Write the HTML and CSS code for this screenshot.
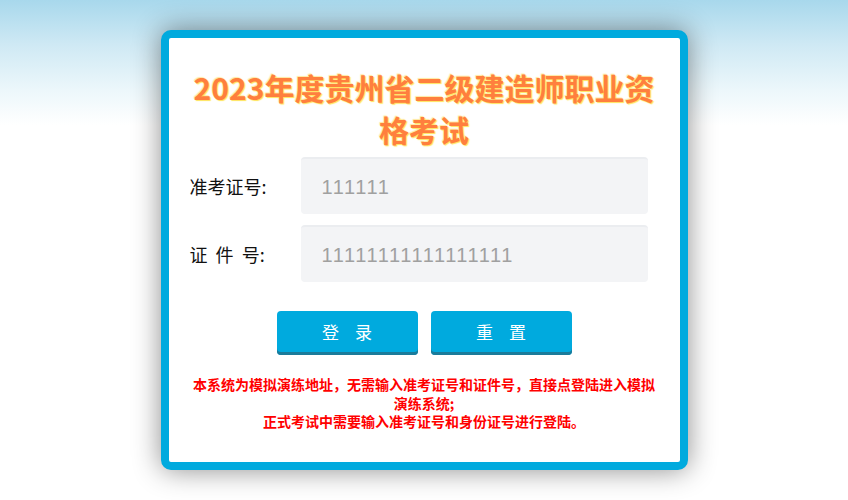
FILE: index.html
```html
<!DOCTYPE html>
<html lang="zh-CN">
  <head>
    <meta charset="UTF-8">
    <meta name="viewport" content="width=device-width, initial-scale=1.0">
    <title>模拟考试登录</title>
    <link rel="stylesheet" href="styles.css">
  </head>
  <body>
    <div id="login">
      <h1 class="title">2023年度贵州省二级建造师职业资格考试</h1>
      <form class="form">
        <div class="row">
          <label class="label">准考证号:</label>
          <input class="field" type="text" placeholder="111111">
        </div>
        <div class="row">
          <label class="label">证&nbsp;&nbsp;件&nbsp;&nbsp;号:</label>
          <input class="field" type="text" placeholder="11111111111111111">
        </div>
        <div class="actions">
          <button type="button" class="btn">登 录</button>
          <button type="reset" class="btn">重 置</button>
        </div>
      </form>
      <p class="note">本系统为模拟演练地址，无需输入准考证号和证件号，直接点登陆进入模拟演练系统;<br>正式考试中需要输入准考证号和身份证号进行登陆。</p>
    </div>
  </body>
</html>
```

FILE: styles.css
```css
body {
  margin: 0;
  height: 500px;
  font-family: "Noto Sans CJK SC", "Liberation Sans", sans-serif;
  background: linear-gradient(to bottom, #a8d8ec 0, #cfe9f4 45px, #ecf7fb 90px, #ffffff 125px, #ffffff 100%);
  padding-top: 30px;
  box-sizing: border-box;
}

#login {
  width: 511px;
  height: 424px;
  margin: 0 auto;
  background: #fff;
  border: 8px solid #00aade;
  border-radius: 10px;
  box-shadow: 0 0 28px rgba(0, 0, 0, 0.45);
}

.title {
  margin: 0;
  padding: 28px 22px 0;
  font-size: 30px;
  line-height: 42px;
  font-weight: bold;
  text-align: center;
  color: #ff7f3e;
  text-shadow: 1px 1px 1px #ffe45a, -1px -1px 1px #ffe9a0;
}

.form {
  margin: 7px 0 0;
}

.row {
  display: flex;
  align-items: center;
  margin-bottom: 11px;
}

.label {
  width: 111px;
  padding-left: 21px;
  font-size: 18px;
  color: #111;
}

.field {
  width: 347px;
  height: 57px;
  box-sizing: border-box;
  border: none;
  border-top: 2px solid #ebedf0;
  border-radius: 4px;
  background: #f3f4f6;
  padding: 2px 0 0 21px;
  font-family: "Liberation Sans", sans-serif;
  font-size: 20px;
  letter-spacing: 1.6px;
  outline: none;
}

.field::placeholder {
  color: #a0a0a0;
}

.actions {
  display: flex;
  justify-content: center;
  gap: 13px;
  margin-top: 29px;
}

.btn {
  width: 141px;
  height: 44px;
  border: none;
  border-radius: 4px;
  background: #00aade;
  box-shadow: inset 0 -3px 0 #1b7b9a;
  color: #fff;
  font-family: "Noto Sans CJK SC", sans-serif;
  font-size: 17px;
  letter-spacing: 6px;
  padding: 0 0 3px 6px;
  cursor: pointer;
}

.note {
  margin: 20px 0 0;
  padding: 0 22px;
  font-size: 14px;
  line-height: 18.5px;
  font-weight: bold;
  color: #ff0000;
  text-align: center;
}
```
